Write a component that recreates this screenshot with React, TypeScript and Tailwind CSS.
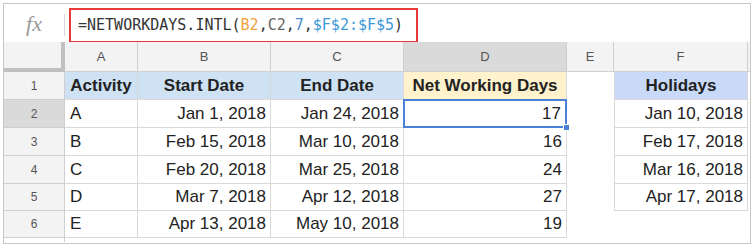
const cols = [
  { key: "A", w: "w-[73px]" },
  { key: "B", w: "w-[133px]" },
  { key: "C", w: "w-[133px]" },
  { key: "D", w: "w-[163px]" },
  { key: "E", w: "w-[47px]" },
  { key: "F", w: "w-[134px]" },
];

const rows = [
  { n: 2, act: "A", start: "Jan 1, 2018", end: "Jan 24, 2018", days: "17", hol: "Jan 10, 2018", h: "h-[28px]" },
  { n: 3, act: "B", start: "Feb 15, 2018", end: "Mar 10, 2018", days: "16", hol: "Feb 17, 2018", h: "h-[28px]" },
  { n: 4, act: "C", start: "Feb 20, 2018", end: "Mar 25, 2018", days: "24", hol: "Mar 16, 2018", h: "h-[28px]" },
  { n: 5, act: "D", start: "Mar 7, 2018", end: "Apr 12, 2018", days: "27", hol: "Apr 17, 2018", h: "h-[27px]" },
  { n: 6, act: "E", start: "Apr 13, 2018", end: "May 10, 2018", days: "19", hol: "", h: "h-[27px]" },
];

const cell = "flex items-center border-r border-b border-[#d9d9d9] text-[17px] text-[#222]";

function FormulaBar() {
  return (
    <div className="flex h-[38px] items-start">
      <div className="flex h-[38px] w-[60px] items-center justify-center">
        <span className="font-['Liberation_Serif',serif] text-[22px] italic text-[#9a9a9a]">fx</span>
      </div>
      <div className="mt-[10px] h-[22px] w-px bg-[#d6d6d6]" />
      <div className="ml-[4px] mt-[4px] flex h-[35px] w-[349px] items-center border-2 border-[#e8393a] pl-[7px] font-['DejaVu_Sans_Mono',monospace] text-[15px] text-[#333]">
        <span>=NETWORKDAYS.INTL(</span>
        <span className="text-[#f0a23c]">B2</span>
        <span>,</span>
        <span className="text-[#666]">C2</span>
        <span>,</span>
        <span className="text-[#4b8bd0]">7</span>
        <span>,</span>
        <span className="text-[#3a9ad9]">$F$2:$F$5</span>
        <span>)</span>
      </div>
    </div>
  );
}

function ColumnHeaders() {
  return (
    <div className="flex h-[30px]">
      <div className="w-[61px] border-r-4 border-b-4 border-[#c0c0c0] bg-[#f3f3f3]" />
      {cols.map((c) => (
        <div
          key={c.key}
          className={`${c.w} flex items-center justify-center border-r border-b border-[#cfcfcf] text-[13px] text-[#555] ${
            c.key === "D" ? "bg-[#dadada]" : "bg-[#f3f3f3]"
          }`}
        >
          {c.key}
        </div>
      ))}
      <div className="flex-1 border-b border-[#cfcfcf] bg-[#f3f3f3]" />
    </div>
  );
}

function RowNum({ n, h }: { n: number; h: string }) {
  return (
    <div
      className={`${h} flex w-[61px] items-center justify-center border-r border-b border-[#cfcfcf] text-[12px] text-[#555] ${
        n === 2 ? "bg-[#dadada]" : "bg-[#f3f3f3]"
      }`}
    >
      {n}
    </div>
  );
}

export default function App() {
  return (
    <div className="m-[3px] h-[241px] w-[748px] overflow-hidden border border-[#c6c6c6] bg-white font-['Liberation_Sans',Arial,sans-serif]">
      <FormulaBar />
      <ColumnHeaders />

      <div className="flex h-[28px]">
        <RowNum n={1} h="h-[28px]" />
        <div className={`${cell} w-[73px] justify-center bg-[#cfe2f3] font-bold`}>Activity</div>
        <div className={`${cell} w-[133px] justify-center bg-[#cfe2f3] font-bold`}>Start Date</div>
        <div className={`${cell} w-[133px] justify-center bg-[#cfe2f3] font-bold`}>End Date</div>
        <div className={`${cell} w-[163px] justify-center bg-[#fff2cc] font-bold`}>Net Working Days</div>
        <div className="w-[47px]" />
        <div className={`${cell} w-[134px] justify-center border-l bg-[#c9daf8] font-bold`}>Holidays</div>
      </div>

      {rows.map((r) => (
        <div key={r.n} className={`flex ${r.h}`}>
          <RowNum n={r.n} h={r.h} />
          <div className={`${cell} w-[73px] pl-[5px]`}>{r.act}</div>
          <div className={`${cell} w-[133px] justify-end pr-[4px]`}>{r.start}</div>
          <div className={`${cell} w-[133px] justify-end pr-[4px]`}>{r.end}</div>
          {r.n === 2 ? (
            <div className="relative -mt-px -ml-px flex h-[29px] w-[164px] items-center justify-end border-2 border-[#4a7fd8] pr-[4px] text-[17px] text-[#222]">
              {r.days}
              <div className="absolute -right-[5px] -bottom-[5px] h-[7px] w-[7px] border border-white bg-[#4a7fd8]" />
            </div>
          ) : (
            <div className={`${cell} w-[163px] justify-end pr-[4px]`}>{r.days}</div>
          )}
          <div className="w-[47px]" />
          {r.hol ? (
            <div className={`${cell} w-[134px] justify-end border-l pr-[4px]`}>{r.hol}</div>
          ) : null}
        </div>
      ))}
      <div className="flex h-[4px]">
        <div className="w-[61px] border-r border-[#cfcfcf]" />
      </div>
    </div>
  );
}
